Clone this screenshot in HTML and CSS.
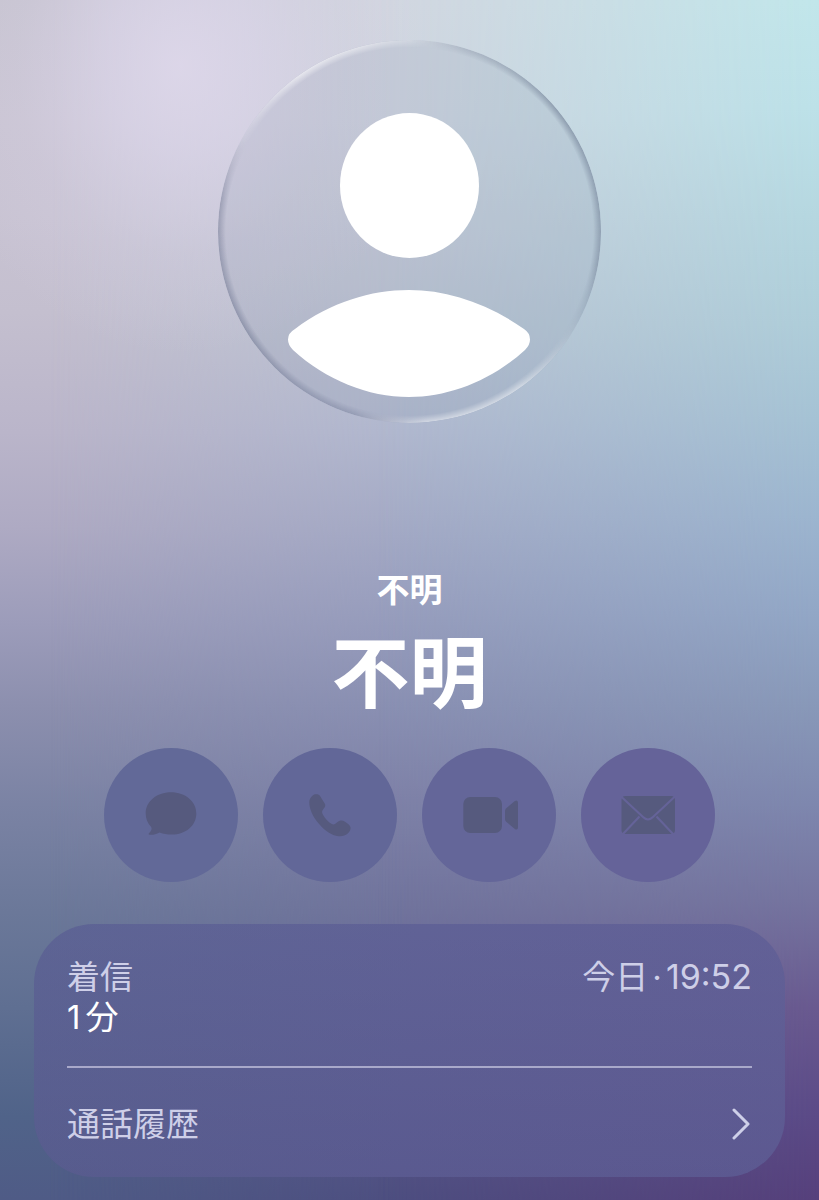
FILE: index.html
```html
<!DOCTYPE html>
<html lang="ja">
<head>
<meta charset="utf-8">
<meta name="viewport" content="width=device-width, initial-scale=1">
<title>不明</title>
<link rel="stylesheet" href="styles.css">
</head>
<body>
<main class="contact">
  <div class="glow" aria-hidden="true"></div>
  <div class="avatar">
    <svg class="avatar-figure" viewBox="0 0 383 383" aria-hidden="true">
      <ellipse cx="191.5" cy="145.5" rx="69.5" ry="72.5"/>
      <path d="M77 289C113 262 153 250 191 250C229 250 269 263 306 289Q312 293 312 299.500Q312 305 307 310C274 340 232 357 191 357C150 357 108 340 75 310Q70 305 70 299.500Q70 293 77 289Z"/>
    </svg>
  </div>
  <p class="subtitle">不明</p>
  <h1 class="name">不明</h1>
  <div class="actions">
    <button class="action" type="button" aria-label="メッセージ" disabled>
      <svg viewBox="0 0 134 134"><path d="M67 44.300C81.500 44.300 92.300 53.600 92.300 65.500C92.300 77.500 82 86.600 67.500 86.600C63 86.600 59.500 86 55.500 84.500C52 86.300 48.500 87.200 45.500 86.700C44.400 86.500 44.400 85.600 45.200 84.900C47.200 83.200 48.300 81 47.200 79C43.500 75.200 41.700 70.700 41.700 65.500C41.700 53.600 52.500 44.300 67 44.300Z"/></svg>
    </button>
    <button class="action" type="button" aria-label="電話" disabled>
      <svg viewBox="0 0 134 134"><path d="M54.500 46.300C56.300 46.600 57.300 48.300 58.300 50L61.700 55.500C62.800 57.400 62.300 58.700 60.800 60.500C59 62.500 58.600 64 59.700 66.200C61.800 70.500 65.300 74 69.300 76.300C71.300 76.900 72.700 75.700 74.200 74.300C76.600 72.300 79.300 72 82 73.700C84.500 75.300 87 77 87.500 79.300C88 81.300 86.700 83.800 84.500 85.800C82 87.900 78.700 88.600 74 88C66 86.300 59.500 80.400 54 73.500C49.500 67.700 46.200 60.300 46.300 54C46.400 50.200 49.500 46.900 52 46.300C53 46.100 53.800 46.100 54.500 46.300Z"/></svg>
    </button>
    <button class="action" type="button" aria-label="ビデオ" disabled>
      <svg viewBox="0 0 134 134"><rect x="41.300" y="49" width="38.700" height="36" rx="7"/><path d="M84 60.500L92.500 53.300Q96 51 96 55V79Q96 83 92.500 80.700L84 73.500Q83 72.500 83 71V63Q83 61.500 84 60.500Z"/></svg>
    </button>
    <button class="action" type="button" aria-label="メール" disabled>
      <svg viewBox="0 0 134 134">
        <mask id="envelope-folds"><rect width="134" height="134" fill="#fff"/><path d="M40 48.500L62 69Q67 74 72 69L94 48.500M41 87L58.500 68.500M93 87L75.500 68.500" fill="none" stroke="#000" stroke-width="2"/></mask>
        <rect x="40.500" y="48" width="53.500" height="38" rx="4" mask="url(#envelope-folds)"/>
      </svg>
    </button>
  </div>
  <section class="card">
    <div class="call">
      <div class="call-info"><span>着信</span><span class="duration"><span>1</span><span>分</span></span></div>
      <time class="call-time" datetime="19:52">今日<span class="dot">·</span><span class="clock">19:52</span></time>
    </div>
    <button class="history" type="button">
      <span>通話履歴</span>
      <svg class="chevron" viewBox="0 0 18 32" aria-hidden="true"><path d="M2 2L16 16L2 30"/></svg>
    </button>
  </section>
</main>
</body>
</html>
```
FILE: styles.css
```css
* { box-sizing: border-box; }

body {
  margin: 0;
  color: #fff;
  font-family: Inter, "Noto Sans CJK JP", sans-serif;
}

.contact {
  position: relative;
  isolation: isolate;
  display: flex;
  flex-direction: column;
  align-items: center;
  min-height: 100vh;
  padding: 40px 34px 23px;
  background: linear-gradient(#c6c3cf 0%, #c9c4d2 10%, #c8c3d2 18%, #c4bfcf 26%, #bab5ca 36%, #aeaac3 44%, #9c9cba 52%, #8c8fae 59%, #7b83a4 67%, #6b7899 76%, #5f6f92 84%, #506389 93%, #4f5b86 100%);
}

/* Two vertical colour ramps that blend sideways into the base one. */
.contact::before,
.contact::after,
.glow {
  content: "";
  position: absolute;
  inset: 0;
  z-index: -1;
}

.contact::before {
  background: linear-gradient(#d2d6e0 0%, #cfd4df 10%, #c5cad8 20%, #bac2d2 28%, #b0b7ce 36%, #a5abc6 43%, #999fbe 50%, #898fb2 59%, #7f82a8 66%, #70739c 76%, #625f91 86%, #4d4e80 100%);
  mask-image: linear-gradient(90deg, transparent 6%, #000 50%);
}

.contact::after {
  background: linear-gradient(#c1e6ea 0%, #bce1e8 9%, #b5d7e0 18%, #aecdd9 27%, #a5c2d4 35%, #9cb5cf 43%, #92a7c6 51%, #8898b8 59%, #7e87ae 67%, #75749f 75%, #69598f 84%, #5b4a87 93%, #56407b 100%);
  mask-image: linear-gradient(90deg, transparent 46%, rgba(0, 0, 0, .55) 76%, #000 100%);
}

.glow {
  background: radial-gradient(ellipse 250px 290px at 22% 65px, rgba(224, 217, 237, .8), rgba(222, 215, 237, .58) 30%, rgba(220, 213, 236, .2) 65%, rgba(220, 213, 236, 0));
}

.avatar {
  position: relative;
  width: 383px;
  aspect-ratio: 1;
  border-radius: 50%;
  background: rgba(130, 145, 170, .16);
}

/* Glass rim: highlights at upper left and lower right. */
.avatar::before {
  content: "";
  position: absolute;
  inset: 0;
  border-radius: 50%;
  background: conic-gradient(
    rgba(255, 255, 255, .25) 0deg,
    rgba(125, 135, 155, .3) 17deg,
    rgba(110, 124, 146, .6) 50deg,
    rgba(110, 124, 146, .5) 100deg,
    rgba(150, 165, 185, .15) 120deg,
    rgba(255, 255, 255, .5) 145deg,
    rgba(255, 255, 255, .5) 175deg,
    rgba(120, 128, 155, .45) 197deg,
    rgba(110, 118, 145, .55) 240deg,
    rgba(120, 125, 150, .5) 280deg,
    rgba(255, 255, 255, .1) 300deg,
    rgba(255, 255, 255, .6) 325deg,
    rgba(255, 255, 255, .5) 345deg,
    rgba(255, 255, 255, .25) 360deg);
  mask-image: radial-gradient(closest-side, transparent 96%, #000 100%);
}

.avatar-figure {
  display: block;
  width: 100%;
  fill: #fff;
}

.subtitle {
  margin: 145px 0 0;
  font-size: 33px;
  font-weight: 700;
  line-height: 44px;
}

.name {
  margin: 16px 0 0;
  font-size: 78px;
  font-weight: 700;
  line-height: 92px;
}

.actions {
  display: flex;
  justify-content: center;
  gap: 25px;
  margin-top: 28px;
}

.action {
  width: 134px;
  height: 134px;
  padding: 0;
  border: 0;
  border-radius: 50%;
  background: #626998;
}

.action:nth-child(2) { background: #626798; }
.action:nth-child(3) { background: #646699; }
.action:nth-child(4) { background: #656399; }

.action svg {
  display: block;
  width: 100%;
  fill: #565a7e;
}

.card {
  align-self: stretch;
  margin-top: 42px;
  padding: 0 33px;
  border-radius: 60px;
  background:
    linear-gradient(rgba(104, 110, 160, .3), rgba(80, 80, 136, .25)),
    linear-gradient(95deg, #59608f, #5d5d92 50%, #605b93);
  color: #cecfe8;
  font-size: 33px;
  line-height: 40px;
}

.call {
  display: flex;
  justify-content: space-between;
  padding: 33px 0 29px;
  border-bottom: 2px solid #a9a9ca;
}

.call-info {
  display: flex;
  flex-direction: column;
}

.duration {
  display: flex;
  gap: 5px;
  color: #fff;
}

.dot { margin: 0 4px; }

.clock { font-size: 34px; }

.history {
  display: flex;
  align-items: center;
  justify-content: space-between;
  width: 100%;
  padding: 36px 0 33px;
  border: 0;
  background: none;
  color: inherit;
  font: inherit;
}

.chevron {
  width: 18px;
  margin-right: 2px;
  fill: none;
  stroke: currentColor;
  stroke-width: 3;
  stroke-linecap: round;
  stroke-linejoin: round;
}
```
